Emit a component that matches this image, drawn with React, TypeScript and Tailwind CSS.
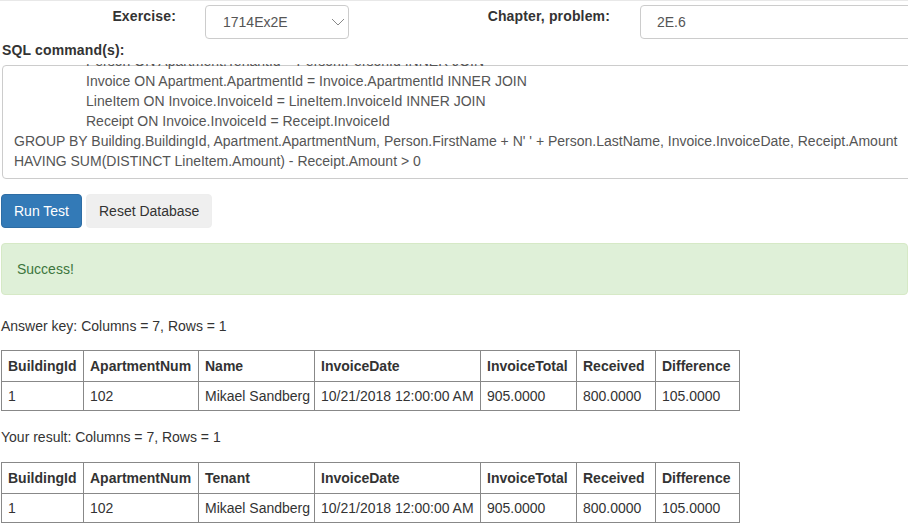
const sqlLines: { text: string; indent?: boolean }[] = [
  { text: "Person ON Apartment.TenantId = Person.PersonId INNER JOIN", indent: true },
  { text: "Invoice ON Apartment.ApartmentId = Invoice.ApartmentId INNER JOIN", indent: true },
  { text: "LineItem ON Invoice.InvoiceId = LineItem.InvoiceId INNER JOIN", indent: true },
  { text: "Receipt ON Invoice.InvoiceId = Receipt.InvoiceId", indent: true },
  {
    text: "GROUP BY Building.BuildingId, Apartment.ApartmentNum, Person.FirstName + N' ' + Person.LastName, Invoice.InvoiceDate, Receipt.Amount",
  },
  { text: "HAVING SUM(DISTINCT LineItem.Amount) - Receipt.Amount > 0" },
];

const row = ["1", "102", "Mikael Sandberg", "10/21/2018 12:00:00 AM", "905.0000", "800.0000", "105.0000"];
// column widths measured border to border
const colW = ["w-[82px]", "w-[115px]", "w-[116px]", "w-[166px]", "w-[96px]", "w-[79px]", "w-[84px]"];

function ResultTable({ nameCol }: { nameCol: string }) {
  const cols = ["BuildingId", "ApartmentNum", nameCol, "InvoiceDate", "InvoiceTotal", "Received", "Difference"];
  return (
    <table className="w-[739px] table-fixed border-collapse text-[14px] leading-[20px] text-[#333]">
      <thead>
        <tr>
          {cols.map((c, i) => (
            <th
              key={c}
              className={`${colW[i]} h-[31px] border border-[#888] px-[6px] py-0 text-left font-bold whitespace-nowrap`}
            >
              {c}
            </th>
          ))}
        </tr>
      </thead>
      <tbody>
        <tr>
          {row.map((v, i) => (
            <td key={i} className="h-[29px] border border-[#888] px-[6px] py-0 whitespace-nowrap">
              {v}
            </td>
          ))}
        </tr>
      </tbody>
    </table>
  );
}

export default function App() {
  return (
    <div
      className="h-[531px] w-[908px] overflow-hidden border-t border-[#e8e8e8] bg-white text-[14px] leading-[20px] text-[#333]"
      style={{ fontFamily: '"Liberation Sans", Arial, sans-serif' }}
    >
      {/* exercise / chapter row */}
      <div className="mt-[4px] flex items-start">
        <label className="w-[176px] shrink-0 pt-[1px] text-right font-bold tracking-[0.15px]">Exercise:</label>
        <div className="ml-[29px] flex h-[34px] w-[144px] shrink-0 items-center justify-between rounded-[4px] border border-[#ccc] pl-[17px] pr-[3px] text-[#555]">
          <span>1714Ex2E</span>
          <svg width="14" height="8" viewBox="0 0 14 8" fill="none" stroke="#888" strokeWidth="1">
            <path d="M1 1l6 6 6-6" />
          </svg>
        </div>
        <label className="w-[261px] shrink-0 pt-[1px] text-right font-bold tracking-[0.15px]">
          Chapter, problem:
        </label>
        <div className="ml-[30px] flex h-[34px] w-[300px] shrink-0 items-center rounded-[4px] border border-[#ccc] pl-[16px] text-[#555]">
          2E.6
        </div>
      </div>

      {/* sql */}
      <div className="mt-[1px] pl-[2px] font-bold tracking-[0.15px]">SQL command(s):</div>
      <div className="mt-[4px] h-[115px] overflow-hidden pl-[2px]">
        <div className="mt-[1px] h-[114px] w-[920px] rounded-[4px] border border-[#ccc] px-[11px] text-[#555]">
          <div className="-mt-[15px]">
            {sqlLines.map((l, i) => (
              <div key={i} className={`whitespace-nowrap ${l.indent ? "pl-[72px]" : ""}`}>
                {l.text}
              </div>
            ))}
          </div>
        </div>
      </div>

      {/* buttons */}
      <div className="mt-[15px] flex gap-[4px] pl-[1px]">
        <button className="h-[34px] rounded-[4px] border border-[#2e6da4] bg-[#337ab7] px-[12px] text-white">
          Run Test
        </button>
        <button className="h-[34px] rounded-[4px] border border-[#eee] bg-[#efefef] px-[12px] text-[#333]">
          Reset Database
        </button>
      </div>

      {/* alert */}
      <div className="mt-[15px] ml-[1px] flex h-[52px] items-center rounded-[4px] border border-[#d6e9c6] bg-[#dff0d8] pl-[15px] text-[#3c763d]">
        Success!
      </div>

      <div className="mt-[21px] pl-[1px]">Answer key: Columns = 7, Rows = 1</div>
      <div className="mt-[14px] pl-[1px]">
        <ResultTable nameCol="Name" />
      </div>

      <div className="mt-[16px] pl-[1px]">Your result: Columns = 7, Rows = 1</div>
      <div className="mt-[15px] pl-[1px]">
        <ResultTable nameCol="Tenant" />
      </div>
    </div>
  );
}
